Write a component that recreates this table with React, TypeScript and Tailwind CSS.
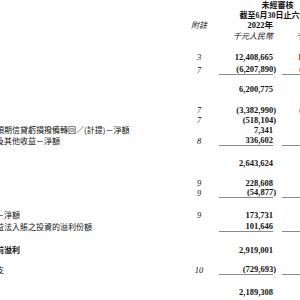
const serif = "font-['Liberation_Serif','Noto_Sans_CJK_TC',serif]";
const cjk = "font-['Noto_Sans_CJK_TC','Noto_Sans_CJK_SC',sans-serif]";

interface Row {
  mt: string;
  label?: string;
  labelOffset?: string;
  labelBold?: boolean;
  note?: string;
  cur?: string;
  prev?: string;
  line?: boolean;
  bold?: boolean;
}

const rows: Row[] = [
  { mt: 'mt-[11px]', label: '收入', note: '3', cur: '12,408,665', prev: '10,905,314' },
  { mt: 'mt-[3px]', label: '銷售成本', note: '7', cur: '(6,207,890)', prev: '(5,514,247)', line: true },
  { mt: 'mt-[9px]', label: '毛利', cur: '6,200,775', prev: '5,391,067' },
  { mt: 'mt-[11px]', label: '銷售及營銷開支', note: '7', cur: '(3,382,990)', prev: '(2,914,553)' },
  { mt: 'mt-0', label: '一般及行政開支', note: '7', cur: '(518,104)', prev: '(233,198)' },
  { mt: 'mt-0', label: '預期信貸虧損撥備轉回／(計提)－淨額', labelOffset: '-ml-[4px]', cur: '7,341', prev: '(12,436)' },
  { mt: 'mt-px', label: '收入及其他收益－淨額', labelOffset: '-ml-[20px]', note: '8', cur: '336,602', prev: '298,117', line: true },
  { mt: 'mt-[12px]', label: '經營溢利', cur: '2,643,624', prev: '2,528,997' },
  { mt: 'mt-[10px]', label: '財務收入', note: '9', cur: '228,608', prev: '185,732' },
  { mt: 'mt-0', label: '財務成本', note: '9', cur: '(54,877)', prev: '(63,420)', line: true },
  { mt: 'mt-[12px]', label: '財務收入－淨額', labelOffset: '-ml-[36px]', note: '9', cur: '173,731', prev: '142,866' },
  { mt: 'mt-[2px]', label: '應佔使用權益法入賬之投資的溢利份額', labelOffset: '-ml-[44px]', cur: '101,646', prev: '88,905', line: true },
  { mt: 'mt-[13px]', label: '除所得稅前溢利', labelOffset: '-ml-[36px]', labelBold: true, cur: '2,919,001', prev: '2,893,150', bold: true },
  { mt: 'mt-[10px]', label: '所得稅開支', labelOffset: '-ml-[36px]', note: '10', cur: '(729,693)', prev: '(716,288)', line: true },
  { mt: 'mt-[12px]', label: '期內溢利', cur: '2,189,308', prev: '2,176,862' },
];

function Amount({ value, line }: { value?: string; line?: boolean }) {
  const neg = value?.startsWith('(');
  return (
    <div
      className={`w-[54px] shrink-0 h-full flex items-center justify-end ${
        line ? 'border-b border-[#8a8a8a]' : ''
      }`}
    >
      <span className={`${serif} font-bold text-[8.5px] leading-none ${neg ? '-mr-[3px]' : ''}`}>
        {value}
      </span>
    </div>
  );
}

export default function App() {
  return (
    <div className="w-[300px] h-[300px] overflow-hidden bg-white text-[#111]">
      <div className="w-[340px] flex flex-col">
        {/* header */}
        <div className="h-[10px] flex items-center">
          <div className="w-[219px] shrink-0" />
          <div className={`w-[117px] text-center ${cjk} font-bold text-[8px] leading-none`}>未經審核</div>
        </div>
        <div className="h-[10px] flex items-center">
          <div className="w-[219px] shrink-0" />
          <div className={`w-[117px] text-center ${cjk} font-bold text-[8px] leading-none whitespace-nowrap`}>
            截至<span className={serif}>6</span>月<span className={serif}>30</span>日止六個月
          </div>
        </div>
        <div className="h-[10px] flex items-center">
          <div className="w-[188px] shrink-0" />
          <div className={`w-[22px] shrink-0 text-center ${cjk} italic text-[8px] leading-none`}>附註</div>
          <div className={`ml-[9px] w-[54px] shrink-0 text-right ${serif} font-bold text-[8.5px] leading-none`}>2022年</div>
          <div className={`ml-[9px] w-[54px] shrink-0 text-right ${serif} font-bold text-[8.5px] leading-none`}>2021年</div>
        </div>
        <div className="mt-px h-[10px] flex items-center">
          <div className="w-[219px] shrink-0" />
          <div className={`w-[54px] shrink-0 text-right ${cjk} italic text-[8px] leading-none`}>千元人民幣</div>
          <div className={`ml-[9px] w-[54px] shrink-0 text-right ${cjk} italic text-[8px] leading-none`}>千元人民幣</div>
        </div>

        {rows.map((r, i) => (
          <div key={i} className={`${r.mt} h-[10px] flex items-center`}>
            <div className="w-[188px] shrink-0 h-full overflow-hidden flex items-center">
              <span
                className={`${cjk} text-[8px] leading-none whitespace-nowrap ${
                  r.labelOffset ?? '-ml-[200px]'
                } ${r.labelBold ? 'font-bold' : ''}`}
              >
                {r.label}
              </span>
            </div>
            <div className={`w-[22px] shrink-0 text-center ${serif} italic text-[8.5px] leading-none`}>{r.note}</div>
            <div className="ml-[9px] h-full flex">
              <Amount value={r.cur} line={r.line} />
            </div>
            <div className="ml-[9px] h-full flex">
              <Amount value={r.prev} line={r.line} />
            </div>
          </div>
        ))}
      </div>
    </div>
  );
}
